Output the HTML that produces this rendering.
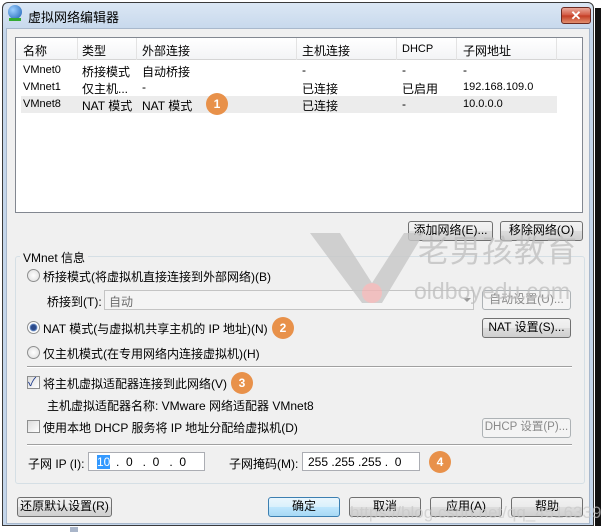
<!DOCTYPE html>
<html><head><meta charset="utf-8"><style>
*{margin:0;padding:0;box-sizing:border-box}
body{width:601px;height:532px;background:#fff;position:relative;overflow:hidden;font-family:"Liberation Sans","Noto Sans CJK SC",sans-serif;font-size:12px;color:#000}
.a{position:absolute;white-space:nowrap}
.btn{position:absolute;white-space:nowrap;border:1px solid #707070;border-radius:3px;background:linear-gradient(#f2f2f2,#ebebeb 50%,#dddddd 51%,#cfcfcf);text-align:center;font-size:12px;line-height:17px}
.dis{color:#8a8a8a;border-color:#adb2b5;background:#f4f4f4}
.badge{position:absolute;width:22px;height:22px;border-radius:50%;background:#e8914a;color:#fff;font-weight:bold;font-size:12px;text-align:center;line-height:22px}
.radio{position:absolute;width:13px;height:13px;border-radius:50%;border:1px solid #8e8f8f;background:radial-gradient(#fff,#dcdcdc)}
.cb{position:absolute;width:13px;height:13px;border:1px solid #8e8f8f;background:linear-gradient(135deg,#dcdcdc,#fff)}
.sep{position:absolute;height:2px;border-top:1px solid #a0a0a0;border-bottom:1px solid #fff}
</style></head><body>
<div class="a" style="left:2px;top:2px;width:592px;height:524px;border:1px solid #3a3a3a;border-radius:6px 6px 0 0;background:linear-gradient(#dbe7f4,#c4d6eb 30px)"></div>
<div class="a" style="left:595px;top:8px;width:6px;height:524px;background:#111"></div>
<div class="a" style="left:0;top:526px;width:601px;height:6px;background:#fff"></div>
<div class="a" style="left:70px;top:527px;width:8px;height:5px;background:#a9b5c9"></div>
<div class="a" style="left:8px;top:5px;width:14px;height:14px;border-radius:50%;background:radial-gradient(circle at 35% 35%,#9dd0ff,#1a5fb4)"></div>
<div class="a" style="left:9px;top:18px;width:12px;height:3px;background:#3a3"></div>
<div class="a" style="left:28px;top:7px;font-size:13px">虚拟网络编辑器</div>
<div class="a" style="left:561px;top:7px;width:30px;height:17px;border:1px solid #6d2b22;border-radius:3px;background:linear-gradient(#e9a99a,#d2553f 50%,#c23a22 51%,#e2906f);color:#fff;font-weight:bold;text-align:center;line-height:15px;font-size:13px">✕</div>
<div class="a" style="left:6px;top:28px;width:584px;height:496px;background:#f0f0f0;border:1px solid #a8b8cc"></div>
<!-- list -->
<div class="a" style="left:15px;top:37px;width:568px;height:176px;background:#fff;border:1px solid #828790"></div>
<div class="a" style="left:16px;top:38px;width:566px;height:22px;background:linear-gradient(#fff,#f3f4f6);border-bottom:1px solid #d5d5d5"></div>
<div class="a" style="left:77px;top:38px;width:1px;height:22px;background:#e3e3e3"></div>
<div class="a" style="left:136px;top:38px;width:1px;height:22px;background:#e3e3e3"></div>
<div class="a" style="left:296px;top:38px;width:1px;height:22px;background:#e3e3e3"></div>
<div class="a" style="left:396px;top:38px;width:1px;height:22px;background:#e3e3e3"></div>
<div class="a" style="left:456px;top:38px;width:1px;height:22px;background:#e3e3e3"></div>
<div class="a" style="left:556px;top:38px;width:1px;height:22px;background:#e3e3e3"></div>
<div class="a" style="left:21px;top:96px;width:536px;height:17px;background:#ececec"></div>
<div class="a" style="left:23px;top:42px">名称</div><div class="a" style="left:82px;top:42px">类型</div><div class="a" style="left:142px;top:42px">外部连接</div><div class="a" style="left:302px;top:42px">主机连接</div><div class="a" style="left:402px;top:43px;font-size:11px">DHCP</div><div class="a" style="left:463px;top:42px">子网地址</div>
<div class="a" style="left:23px;top:64px;font-size:11px">VMnet0</div><div class="a" style="left:82px;top:63px">桥接模式</div><div class="a" style="left:142px;top:63px">自动桥接</div><div class="a" style="left:302px;top:63px">-</div><div class="a" style="left:402px;top:63px">-</div><div class="a" style="left:463px;top:63px">-</div>
<div class="a" style="left:23px;top:81px;font-size:11px">VMnet1</div><div class="a" style="left:82px;top:80px">仅主机...</div><div class="a" style="left:142px;top:80px">-</div><div class="a" style="left:302px;top:80px">已连接</div><div class="a" style="left:402px;top:80px">已启用</div><div class="a" style="left:463px;top:81px;font-size:11px">192.168.109.0</div>
<div class="a" style="left:23px;top:98px;font-size:11px">VMnet8</div><div class="a" style="left:82px;top:97px">NAT 模式</div><div class="a" style="left:142px;top:97px">NAT 模式</div><div class="a" style="left:302px;top:97px">已连接</div><div class="a" style="left:402px;top:97px">-</div><div class="a" style="left:463px;top:98px;font-size:11px">10.0.0.0</div>
<div class="badge" style="left:206px;top:93px">1</div>
<div class="btn" style="left:408px;top:221px;width:85px;height:20px">添加网络(E)...</div>
<div class="btn" style="left:500px;top:221px;width:83px;height:20px">移除网络(O)</div>
<!-- group -->
<div class="a" style="left:15px;top:256px;width:570px;height:228px;border:1px solid #d5dfe5;border-radius:3px"></div>
<div class="a" style="left:20px;top:249px;background:#f0f0f0;padding:0 3px">VMnet 信息</div>
<div class="radio" style="left:27px;top:269px"></div><div class="a" style="left:43px;top:268px">桥接模式(将虚拟机直接连接到外部网络)(B)</div>
<div class="a" style="left:47px;top:293px">桥接到(T):</div>
<div class="a" style="left:104px;top:290px;width:370px;height:20px;border:1px solid #c4c4c4;background:#f4f4f4;color:#6d6d6d;padding:2px 4px">自动</div>
<div class="a" style="left:463px;top:298px;width:0;height:0;border:4px solid transparent;border-top-color:#9a9a9a"></div>
<div class="btn dis" style="left:482px;top:290px;width:89px;height:20px">自动设置(U)...</div>
<div class="radio" style="left:27px;top:321px;background:radial-gradient(#2b4a8a 30%,#6a8ec8 45%,#fff 55%)"></div><div class="a" style="left:43px;top:320px">NAT 模式(与虚拟机共享主机的 IP 地址)(N)</div>
<div class="badge" style="left:272px;top:317px">2</div>
<div class="btn" style="left:482px;top:318px;width:89px;height:20px">NAT 设置(S)...</div>
<div class="radio" style="left:27px;top:346px"></div><div class="a" style="left:43px;top:345px">仅主机模式(在专用网络内连接虚拟机)(H)</div>
<div class="sep" style="left:27px;top:366px;width:545px"></div>
<div class="cb" style="left:27px;top:376px"></div><div class="a" style="left:28px;top:373px;color:#1d3a8a;font-size:12px">✓</div><div class="a" style="left:43px;top:375px">将主机虚拟适配器连接到此网络(V)</div>
<div class="badge" style="left:231px;top:372px">3</div>
<div class="a" style="left:47px;top:397px">主机虚拟适配器名称: VMware 网络适配器 VMnet8</div>
<div class="cb" style="left:27px;top:420px"></div><div class="a" style="left:43px;top:419px">使用本地 DHCP 服务将 IP 地址分配给虚拟机(D)</div>
<div class="btn dis" style="left:482px;top:418px;width:89px;height:20px;font-size:11.5px">DHCP 设置(P)...</div>
<div class="sep" style="left:27px;top:444px;width:545px"></div>
<div class="a" style="left:28px;top:455px">子网 IP (I):</div>
<div class="a" style="left:88px;top:452px;width:117px;height:19px;background:#fff;border:1px solid #abadb3"></div>
<div class="a" style="left:97px;top:455px;background:#3399ff;color:#fff">10</div><div class="a" style="left:116px;top:455px;word-spacing:0">.&nbsp; 0&nbsp;&nbsp; .&nbsp; 0&nbsp;&nbsp; .&nbsp; 0</div>
<div class="a" style="left:229px;top:455px">子网掩码(M):</div>
<div class="a" style="left:302px;top:452px;width:118px;height:19px;background:#fff;border:1px solid #abadb3"></div>
<div class="a" style="left:308px;top:455px">255 .255 .255 .&nbsp; 0</div>
<div class="badge" style="left:429px;top:451px">4</div>
<div class="btn" style="left:17px;top:497px;width:95px;height:20px">还原默认设置(R)</div>
<div class="btn" style="left:268px;top:497px;width:72px;height:20px;border-color:#3c7fb1;background:linear-gradient(#eaf6fd,#d9f0fc 50%,#bee6fd 51%,#a7d9f5)">确定</div>
<div class="btn" style="left:349px;top:497px;width:72px;height:20px">取消</div>
<div class="btn" style="left:430px;top:497px;width:72px;height:20px">应用(A)</div>
<div class="btn" style="left:511px;top:497px;width:72px;height:20px">帮助</div>
<!-- watermark -->
<svg class="a" style="left:300px;top:225px;opacity:.8" width="130" height="85"><polygon points="10,8 40,8 72,58 104,8 124,8 82,78 62,78" fill="#c8c8c8"/><circle cx="72" cy="68" r="10" fill="#f0b4b4"/></svg>
<div class="a" style="left:418px;top:235px;font-size:31px;line-height:34px;color:rgba(190,190,190,.75);letter-spacing:1px">老男孩教育</div>
<div class="a" style="left:414px;top:278px;font-size:23px;line-height:26px;color:rgba(190,190,190,.75)">oldboyedu.com</div>
<div class="a" style="left:350px;top:503px;font-size:17px;color:rgba(200,200,200,.7)">https://blog.csdn.net/qq_45163391</div>
</body></html>
